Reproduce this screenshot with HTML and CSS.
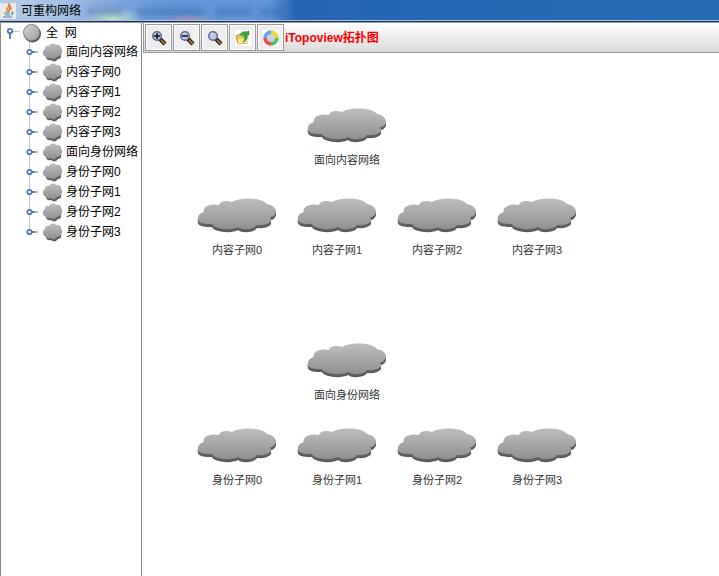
FILE: index.html
```
<!DOCTYPE html>
<html lang="zh-CN">
<head>
<meta charset="utf-8">
<title>可重构网络</title>
<link rel="stylesheet" href="styles.css">
</head>
<body>
<svg class="defs" aria-hidden="true">
  <defs>
    <linearGradient id="cloudFill" x1="0" y1="0" x2="0" y2="1"><stop offset="0" stop-color="#bebebe"/><stop offset="1" stop-color="#909090"/></linearGradient>
    <linearGradient id="ballFill" x1="0" y1="0" x2="1" y2="1"><stop offset="0" stop-color="#d2d2d2"/><stop offset="1" stop-color="#a0a0a0"/></linearGradient>
    <path id="cloudShape" d="M1 22C0 18 3 15 7 14C5 9 13 5 22 7C23 3 30 2 35 4C42 -1 65 -1 70 6C77 7 82 13 77 17.500C76 19 75 19 73 19C77 24 70 28 60 27C58 31 46 33 41 29C34 33 17 31 15 26C9 26 2 26 1 22Z"/>
    <symbol id="cloud" viewBox="0 0 80 37"><use href="#cloudShape" y="4" fill="#555"/><use href="#cloudShape" y="3" fill="#606060"/><use href="#cloudShape" y="1" fill="url(#cloudFill)"/></symbol>
    <symbol id="small" viewBox="0 0 19 19"><path d="M1 12C0 10 1 8 2 7C2 4 5 3 7 4C8 1 12 1 13 3C16 2 18 3 18 6C19 8 19 9 18 11C19 14 17 16 15 16C13 19 10 19 8 17C5 18 3 16 3 14Z" fill="#5c5c5c"/><path d="M0 10C0 8 0 7 2 6C2 3 4 2 6 3C8 0 11 0 13 2C16 1 18 3 18 5C19 7 19 8 18 10C18 13 16 14 14 14C12 17 9 17 8 15C5 16 3 15 3 13C1 13 0 12 0 10Z" fill="url(#cloudFill)"/></symbol>
    <symbol id="knob" viewBox="0 0 12 8"><path d="M5 3H9V5H5Z" fill="#6482bd"/><path d="M9 3H12V5H9Z" fill="#a6b9dc"/><circle cx="3.500" cy="4" r="2.200" fill="#fff" stroke="#5577b8" stroke-width="1.800"/></symbol>
    <symbol id="lens" viewBox="0 0 16 16"><path d="M9 9L14 14" stroke="#111" stroke-width="4"/><path d="M10 10L14 14" stroke="#b87333" stroke-width="2"/><circle cx="6" cy="6" r="4.300" fill="#bfc5e6" stroke="#62678c" stroke-width="1.500"/><path d="M4 4L6 3" stroke="#fff"/></symbol>
  </defs>
</svg>
<header class="titlebar">
  <svg class="java" viewBox="0 0 16 16" aria-hidden="true"><rect width="16" height="16" rx="1" fill="#e9e9e7"/><path d="M8 9C4 6 10 5 9 1C13 5 7 6 9 9M10 8C9 6 11 5 12 5" fill="none" stroke="#e87725" stroke-width="1.300"/><path d="M4 10H10M5 12H10M3 14H12M11 9C14 9 13 11 11 12" fill="none" stroke="#5783a8" stroke-width="1.200"/></svg>
  <h1>可重构网络</h1>
  <svg class="glass" viewBox="0 0 200 20" aria-hidden="true"><g fill="none" stroke="#244f8e" stroke-width="6" opacity=".5"><path d="M2 11H38M52 11H118M130 11H167M174 11H198" stroke-dasharray="7 2"/></g></svg>
</header>
<main class="workspace">
  <nav class="tree" aria-label="网络">
    <div class="root"><svg class="rootknob" viewBox="0 0 13 12" aria-hidden="true"><path d="M6 4H13V5H6Z" fill="#b9c9e4"/><path d="M3 6H5V12H3Z" fill="#6482bd"/><circle cx="4" cy="4" r="2.200" fill="#fff" stroke="#5577b8" stroke-width="1.800"/></svg><svg class="ball" viewBox="0 0 20 20" aria-hidden="true"><circle cx="10.500" cy="11" r="8.500" fill="#555"/><circle cx="9.500" cy="9.500" r="8.500" fill="#8a8a8a"/><circle cx="9.500" cy="9.500" r="7.500" fill="url(#ballFill)"/></svg><span>全&nbsp; 网</span></div>
    <ul>
      <li><svg class="knob"><use href="#knob"/></svg><svg class="small"><use href="#small"/></svg><span>面向内容网络</span></li>
      <li><svg class="knob"><use href="#knob"/></svg><svg class="small"><use href="#small"/></svg><span>内容子网0</span></li>
      <li><svg class="knob"><use href="#knob"/></svg><svg class="small"><use href="#small"/></svg><span>内容子网1</span></li>
      <li><svg class="knob"><use href="#knob"/></svg><svg class="small"><use href="#small"/></svg><span>内容子网2</span></li>
      <li><svg class="knob"><use href="#knob"/></svg><svg class="small"><use href="#small"/></svg><span>内容子网3</span></li>
      <li><svg class="knob"><use href="#knob"/></svg><svg class="small"><use href="#small"/></svg><span>面向身份网络</span></li>
      <li><svg class="knob"><use href="#knob"/></svg><svg class="small"><use href="#small"/></svg><span>身份子网0</span></li>
      <li><svg class="knob"><use href="#knob"/></svg><svg class="small"><use href="#small"/></svg><span>身份子网1</span></li>
      <li><svg class="knob"><use href="#knob"/></svg><svg class="small"><use href="#small"/></svg><span>身份子网2</span></li>
      <li><svg class="knob"><use href="#knob"/></svg><svg class="small"><use href="#small"/></svg><span>身份子网3</span></li>
    </ul>
  </nav>
  <section class="view">
    <div class="toolbar">
      <button type="button" aria-label="放大"><svg viewBox="0 0 16 16"><use href="#lens"/><path d="M3 6H9M6 3V9" stroke="#111" stroke-width="1.500"/></svg></button>
      <button type="button" aria-label="缩小"><svg viewBox="0 0 16 16"><use href="#lens"/><path d="M3 6H9" stroke="#111" stroke-width="1.500"/></svg></button>
      <button type="button" aria-label="缩放"><svg viewBox="0 0 16 16"><use href="#lens"/></svg></button>
      <button type="button" aria-label="打开"><svg viewBox="0 0 16 16"><rect width="16" height="16" fill="#fff"/><path d="M1 6L5 4L7 6L12 6L12 13L3 14Z" fill="#dfc85a" stroke="#b49b37"/><path d="M3 9L14 8L12 13L3 14Z" fill="#f4e98c"/><path d="M8 12C10 10 10 8 9 6C8 4 6 5 5 5C6 2 9 1 11 2L14 1L14 5L12 5C13 8 11 11 8 12Z" fill="#35a637" stroke="#23752a" stroke-width=".5"/></svg></button>
      <button type="button" aria-label="颜色"><svg viewBox="0 0 16 16"><rect width="16" height="16" fill="#fff"/><g fill="none" stroke-width="4.500"><path d="M8 2.500A5.500 5.500 0 0 1 13.500 8" stroke="#f2d63c"/><path d="M13.500 8A5.500 5.500 0 0 1 8 13.500" stroke="#4fc065"/><path d="M8 13.500A5.500 5.500 0 0 1 2.500 8" stroke="#ec5047"/><path d="M2.500 8A5.500 5.500 0 0 1 8 2.500" stroke="#64a6ee"/></g><circle cx="8" cy="8" r="4" fill="#ccd0d8"/></svg></button>
      <strong>iTopoview拓扑图</strong>
    </div>
    <div class="canvas">
      <figure class="node upper hub"><svg><use href="#cloud"/></svg><figcaption>面向内容网络</figcaption></figure>
      <figure class="node upper c0"><svg><use href="#cloud"/></svg><figcaption>内容子网0</figcaption></figure>
      <figure class="node upper c1"><svg><use href="#cloud"/></svg><figcaption>内容子网1</figcaption></figure>
      <figure class="node upper c2"><svg><use href="#cloud"/></svg><figcaption>内容子网2</figcaption></figure>
      <figure class="node upper c3"><svg><use href="#cloud"/></svg><figcaption>内容子网3</figcaption></figure>
      <figure class="node lower hub"><svg><use href="#cloud"/></svg><figcaption>面向身份网络</figcaption></figure>
      <figure class="node lower c0"><svg><use href="#cloud"/></svg><figcaption>身份子网0</figcaption></figure>
      <figure class="node lower c1"><svg><use href="#cloud"/></svg><figcaption>身份子网1</figcaption></figure>
      <figure class="node lower c2"><svg><use href="#cloud"/></svg><figcaption>身份子网2</figcaption></figure>
      <figure class="node lower c3"><svg><use href="#cloud"/></svg><figcaption>身份子网3</figcaption></figure>
    </div>
  </section>
</main>
</body>
</html>
```
FILE: styles.css
```
* { box-sizing: border-box; }
body { margin: 0; min-height: 100vh; display: flex; flex-direction: column; font: 12px/20px "Liberation Sans", "Noto Sans CJK SC", sans-serif; color: #000; background: #fff; }
svg { display: block; flex: none; }
.defs { position: absolute; width: 0; height: 0; }
.titlebar { flex: none; height: 23px; display: flex; align-items: center; gap: 5px; border-bottom: 1px solid #999; box-shadow: inset 0 -1px #1b3557, inset 0 -2px #a5c4e8; padding-bottom: 1px;
  background:
    radial-gradient(ellipse 30px 12px at 113px 19px, #c4e8cd 0, #b9ddc900 100%),
    radial-gradient(ellipse 28px 7px at 188px 20px, #a696bd 0, #a696bd00 100%),
    linear-gradient(90deg, #b5cbe7 0, #a4c2e5 60px, #7da6da 115px, #6699da 160px, #5f96d8 270px, #2765b4 295px, #2467b3 60%, #286db4 100%); }
.titlebar h1 { margin: 0; font-size: 12px; font-weight: 400; line-height: 20px; }
.java { width: 16px; height: 16px; }
.glass { width: 200px; height: 20px; filter: blur(3px); }
.workspace { flex: 1; display: grid; grid-template-columns: 142px 1fr; }
.tree { border-left: 1px solid #888; border-right: 1px solid #888; white-space: nowrap; }
.root { display: flex; align-items: center; height: 19px; padding-left: 5px; }
.rootknob { width: 13px; height: 12px; margin-right: 3px; }
.ball { width: 20px; height: 20px; margin-right: 4px; }
.tree ul { list-style: none; margin: 0 0 0 28px; padding: 0; background: linear-gradient(#b9c9e4, #b9c9e4) 0 0 / 1px 190px no-repeat; }
.tree li { height: 20px; display: flex; align-items: center; }
.knob { width: 12px; height: 8px; margin-left: -3px; margin-right: 5px; }
.small { width: 19px; height: 19px; margin-right: 4px; }
.view { display: flex; flex-direction: column; padding-left: 1px; min-width: 0; }
.toolbar { display: flex; align-items: center; gap: 1px; height: 30px; padding-left: 1px; border-left: 1px solid #999; border-bottom: 1px solid #999; background: linear-gradient(#fff, #dadada); }
.toolbar button { width: 27px; height: 27px; padding: 0; border: 1px solid #999; box-shadow: inset 0 0 0 1px #fff; background: #eee; display: grid; place-items: center; }
.toolbar button svg { width: 16px; height: 16px; }
.toolbar strong { color: #f00; }
.canvas { position: relative; flex: 1; }
.node { position: absolute; width: 80px; margin: 0; text-align: center; color: #333; font-size: 11px; line-height: 16px; }
.node svg { width: 80px; height: 37px; margin-bottom: 8px; }
.upper { top: 144px; }
.lower { top: 374px; }
.c0 { left: 54px; }
.c1 { left: 154px; }
.c2 { left: 254px; }
.c3 { left: 354px; }
.hub { left: 164px; }
.upper.hub { top: 54px; }
.lower.hub { top: 289px; }
```
